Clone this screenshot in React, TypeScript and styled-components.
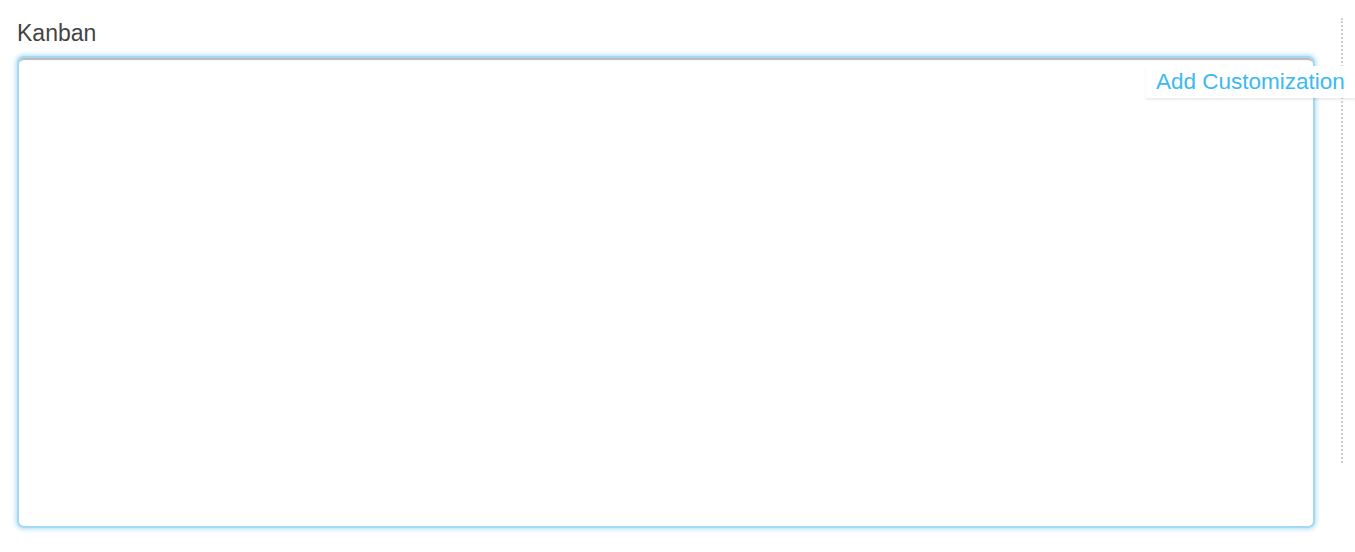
import React from 'react';
import styled, { createGlobalStyle } from 'styled-components';

const GlobalStyle = createGlobalStyle`
  body {
    margin: 0;
    background: #fff;
    font-family: 'Liberation Sans', Arial, sans-serif;
  }
`;

function App() {
  return (
    <Page>
      <GlobalStyle />
      <Main>
        <Title>{'Kanban'}</Title>
        <Board />
      </Main>
      <Divider />
      <AddButton>{'Add Customization'}</AddButton>
    </Page>
  );
}

export default App;

const Page = styled.div`
  position: relative;
  width: 1355px;
  height: 552px;
  display: flex;
  align-items: flex-start;
  overflow: hidden;
`;

const Main = styled.div`
  width: 1298px;
  padding: 20px 0 0 17px;
  display: flex;
  flex-direction: column;
  gap: 10px;
`;

const Title = styled.div`
  color: #444;
  font-size: 23px;
  line-height: 26px;
  height: 26px;
`;

const Board = styled.div`
  height: 468px;
  border: 2px solid #a4d9f3;
  border-radius: 7px;
  background: #fff;
  box-shadow:
    0 0 5px 1px rgba(120, 200, 240, 0.65),
    inset 0 3px 1px -1px #b8b8b8;
`;

const Divider = styled.div`
  margin: 18px 0 0 26px;
  height: 445px;
  border-left: 2px dotted #cfcfcf;
`;

const AddButton = styled.div`
  position: absolute;
  top: 66px;
  left: 1146px;
  width: 209px;
  height: 32px;
  padding-left: 10px;
  box-sizing: border-box;
  background: #fff;
  color: #3cb9f2;
  font-size: 22.5px;
  line-height: 32px;
  white-space: nowrap;
  box-shadow: 0 2px 2px rgba(0, 0, 0, 0.08);
`;
